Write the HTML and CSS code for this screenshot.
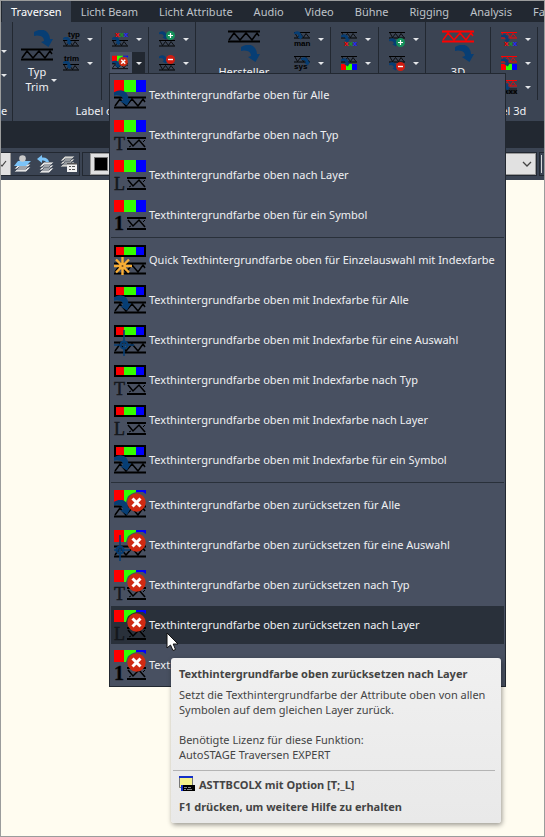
FILE: index.html
```html
<!DOCTYPE html>
<html lang="de">
<head>
<meta charset="utf-8">
<title>Traversen</title>
<link rel="stylesheet" href="styles.css">
</head>
<body>
<svg class="defs" aria-hidden="true">
  <symbol id="truss" viewBox="0 0 32 13" preserveAspectRatio="none"><path d="M0 1.500H32M0 11.500H32" stroke="currentColor" stroke-width="2"/><path d="M1 10L6 3L12 10L18 3L24 10L29 3L31 6" fill="none" stroke="currentColor" stroke-width="1.500"/></symbol>
  <symbol id="truss-s" viewBox="0 0 16 7"><path d="M0 .5H16M0 6H16" fill="none" stroke="currentColor"/><path d="M1 1L3.500 5.500L6.500 1.500L9.500 5.500L12 1.500L15 5.500" fill="none" stroke="currentColor" stroke-width=".8"/></symbol>
  <symbol id="truss-x" viewBox="0 0 19 13"><path d="M0 1H19M0 12H19" stroke="currentColor" stroke-width="2"/><path d="M1 3L6 9L12 3L18 10" fill="none" stroke="currentColor" stroke-width="1.500"/><path d="M2 10L4 9M16 5L18 3" stroke="currentColor"/></symbol>
  <symbol id="arrow" viewBox="0 0 19 17"><path d="M0 2Q9-3 14 3Q16 6 16 9L19 9L14.500 17L7 12L10 11Q10 7 6.500 6Q3 5 0 6Z" fill="#073e74"/></symbol>
  <symbol id="rgb" viewBox="0 0 32 12"><path d="M0 0H10V12H0Z" fill="red"/><path d="M10 0H22V12H10Z" fill="#3f0"/><path d="M22 0H32V12H22Z" fill="#00f"/></symbol>
  <symbol id="rgb-frame" viewBox="0 0 32 12"><path d="M0 0H32V12H0Z"/><path d="M2 2H10V10H2Z" fill="red"/><path d="M10 2H22V10H10Z" fill="#3f0"/><path d="M22 2H30V10H22Z" fill="#00f"/></symbol>
  <symbol id="rgb-cut" viewBox="0 0 32 12"><path d="M0 0H10V12H0Z" fill="red"/><path d="M10 0H22V2Q13 4 12 12H10Z" fill="#3f0"/><path d="M22 0H32V4L29 2H22Z" fill="#00f"/></symbol>
  <symbol id="cross" viewBox="0 0 19 19"><circle cx="9.500" cy="9.500" r="9.200" fill="#cf2a12"/><path d="M5.500 5.500L13.500 13.500M13.500 5.500L5.500 13.500" stroke="#fff" stroke-width="3"/></symbol>
  <symbol id="plus" viewBox="0 0 9 9"><circle cx="4.500" cy="4.500" r="4.500" fill="#14905a"/><path d="M2 4.500H7M4.500 2V7" stroke="#fff" stroke-width="1.200"/></symbol>
  <symbol id="minus" viewBox="0 0 9 9"><circle cx="4.500" cy="4.500" r="4.500" fill="#cf1c10"/><path d="M2 4.500H7" stroke="#fff" stroke-width="1.400"/></symbol>
  <symbol id="target" viewBox="0 0 20 26"><path d="M10 0V26M0 15H20" stroke="#073e74" stroke-width="1.600"/><circle cx="10" cy="15" r="3.500" fill="none" stroke="#073e74" stroke-width="2"/></symbol>
  <symbol id="i-all" viewBox="0 0 32 32"><use href="#rgb" y="1" width="32" height="12"/><use href="#truss" y="17" width="32" height="13"/><use href="#arrow" y="11" width="17" height="16"/></symbol>
  <symbol id="i-sel" viewBox="0 0 32 32"><use href="#rgb" y="1" width="32" height="12"/><use href="#truss-x" x="13" y="18" width="19" height="13"/></symbol>
  <symbol id="f-quick" viewBox="0 0 32 32"><use href="#rgb-frame" y="1" width="32" height="12"/><use href="#truss" y="18" width="32" height="13"/><path d="M8.500 13V31M0 22H18M2 15.500L15 28.500M15 15.500L2 28.500" stroke="#f9ad35" stroke-width="2.400"/><circle cx="8.500" cy="22" r="3.500" fill="#f9ad35"/><circle cx="8.500" cy="22" r="1" fill="#7a5220"/></symbol>
  <symbol id="f-all" viewBox="0 0 32 32"><use href="#rgb-frame" y="1" width="32" height="12"/><use href="#truss" y="17" width="32" height="13"/><use href="#arrow" y="11" width="17" height="16"/></symbol>
  <symbol id="f-pick" viewBox="0 0 32 32"><use href="#rgb-frame" y="1" width="32" height="12"/><use href="#truss" y="17" width="32" height="13"/><use href="#target" y="6" width="20" height="26"/></symbol>
  <symbol id="f-sel" viewBox="0 0 32 32"><use href="#rgb-frame" y="1" width="32" height="12"/><use href="#truss-x" x="13" y="18" width="19" height="13"/></symbol>
  <symbol id="r-all" viewBox="0 0 32 32"><use href="#rgb-cut" y="1" width="32" height="12"/><use href="#truss" y="16" width="32" height="13"/><use href="#arrow" y="11" width="17" height="15"/><use href="#cross" x="13" y="4" width="19" height="19"/></symbol>
  <symbol id="r-pick" viewBox="0 0 32 32"><use href="#rgb-cut" y="1" width="32" height="12"/><use href="#truss" y="16" width="32" height="13"/><use href="#target" x="-4" y="6" width="20" height="26"/><use href="#cross" x="13" y="4" width="19" height="19"/></symbol>
  <symbol id="r-sel" viewBox="0 0 32 32"><use href="#rgb-cut" y="1" width="32" height="12"/><use href="#truss-x" x="13" y="18" width="19" height="13"/><use href="#cross" x="13" y="4" width="19" height="19"/></symbol>
</svg>

<div class="app">
  <nav class="tabs">
    <a href="#" class="tab active">Traversen</a><a href="#" class="tab">Licht Beam</a><a href="#" class="tab">Licht Attribute</a><a href="#" class="tab">Audio</a><a href="#" class="tab">Video</a><a href="#" class="tab">Bühne</a><a href="#" class="tab">Rigging</a><a href="#" class="tab">Analysis</a><a href="#" class="tab">Fa</a>
  </nav>

  <div class="ribbon">
    <section class="panel stub">
      <div class="tools"><div class="col">
        <button class="split" aria-label="Mehr"><i class="caret"></i></button>
        <button class="split" aria-label="Mehr"><i class="caret"></i></button>
      </div></div>
      <h2>e</h2>
    </section>

    <section class="panel">
      <div class="tools">
        <button class="big">
          <svg width="32" height="32" viewBox="0 0 32 32"><use href="#arrow" x="13" y="0" width="19" height="17"/><use href="#truss" y="18" width="32" height="13"/></svg>
          <span class="two">Typ<br>Trim<i class="caret"></i></span>
        </button>
        <div class="col plain">
          <button class="split" aria-label="Typ"><svg width="16" height="16" viewBox="0 0 16 16"><text x="5" y="6" class="tiny">typ</text><use href="#truss-s" y="9" width="16" height="7"/><use href="#arrow" y="6" width="9" height="8"/></svg><i class="caret"></i></button>
          <button class="split" aria-label="Trim"><svg width="16" height="16" viewBox="0 0 16 16"><text x="1" y="6" class="tiny">trim</text><use href="#truss-s" y="9" width="16" height="7"/><use href="#arrow" y="6" width="9" height="8"/></svg><i class="caret"></i></button>
        </div>
        <div class="col">
          <button class="split" aria-label="Textfarbe oben"><svg width="16" height="16" viewBox="0 0 16 16"><text x="3" y="6" class="tiny"><tspan class="red">x</tspan><tspan class="green">x</tspan><tspan class="blue">x</tspan></text><use href="#truss-s" y="9" width="16" height="7"/><use href="#arrow" y="6" width="9" height="8"/></svg><i class="caret"></i></button>
          <button class="split open" aria-label="Texthintergrundfarbe oben"><svg width="16" height="16" viewBox="0 0 32 32"><use href="#r-all" width="32" height="32"/></svg><i class="caret"></i></button>
        </div>
        <div class="col">
          <button class="split" aria-label="Oben ein"><svg width="16" height="16" viewBox="0 0 16 16"><use href="#truss-s" y="9" width="16" height="7"/><use href="#arrow" width="9" height="9"/><use href="#plus" x="7" width="9" height="9"/></svg><i class="caret"></i></button>
          <button class="split" aria-label="Oben aus"><svg width="16" height="16" viewBox="0 0 16 16"><use href="#truss-s" y="9" width="16" height="7"/><use href="#arrow" width="9" height="9"/><use href="#minus" x="7" width="9" height="9"/></svg><i class="caret"></i></button>
        </div>
      </div>
      <h2>Label oben</h2>
    </section>

    <section class="panel">
      <div class="tools">
        <button class="big wide">
          <svg width="32" height="32" viewBox="0 0 32 32"><use href="#truss" y="0" width="32" height="13"/><use href="#arrow" x="13" y="15" width="19" height="17"/></svg>
          <span>Hersteller</span>
        </button>
        <div class="col plain">
          <button class="split" aria-label="Manuell"><svg width="16" height="16" viewBox="0 0 16 16"><use href="#truss-s" y="1" width="16" height="7"/><use href="#arrow" y="0" width="9" height="9"/><text x="0" y="15" class="tiny">man</text></svg><i class="caret"></i></button>
          <button class="split" aria-label="System"><svg width="16" height="16" viewBox="0 0 16 16"><use href="#truss-s" y="1" width="16" height="7"/><use href="#arrow" x="7" y="2" width="9" height="9"/><text x="0" y="14" class="tiny">sys</text></svg><i class="caret"></i></button>
        </div>
        <div class="col">
          <button class="split" aria-label="Textfarbe unten"><svg width="16" height="16" viewBox="0 0 16 16"><use href="#truss-s" y="1" width="16" height="7"/><text x="3" y="15" class="tiny"><tspan class="red">x</tspan><tspan class="green">x</tspan><tspan class="blue">x</tspan></text><use href="#arrow" y="3" width="9" height="9"/></svg><i class="caret"></i></button>
          <button class="split" aria-label="Texthintergrundfarbe unten"><svg width="16" height="16" viewBox="0 0 16 16"><use href="#truss-s" y="1" width="16" height="7"/><use href="#rgb" y="9" width="16" height="6"/><use href="#arrow" y="3" width="9" height="9"/></svg><i class="caret"></i></button>
        </div>
        <div class="col">
          <button class="split" aria-label="Unten ein"><svg width="16" height="16" viewBox="0 0 16 16"><use href="#truss-s" y="1" width="16" height="7"/><use href="#arrow" y="7" width="9" height="9"/><use href="#plus" x="7" y="7" width="9" height="9"/></svg><i class="caret"></i></button>
          <button class="split" aria-label="Unten aus"><svg width="16" height="16" viewBox="0 0 16 16"><use href="#truss-s" y="1" width="16" height="7"/><use href="#arrow" y="7" width="9" height="9"/><use href="#minus" x="7" y="7" width="9" height="9"/></svg><i class="caret"></i></button>
        </div>
      </div>
    </section>

    <section class="panel">
      <div class="tools">
        <button class="big mid">
          <svg width="32" height="32" viewBox="0 0 32 32"><use href="#truss" class="redline" y="0" width="32" height="13"/><use href="#arrow" x="13" y="15" width="19" height="17"/></svg>
          <span>3D</span>
        </button>
        <div class="col">
          <button class="split" aria-label="Textfarbe 3d"><svg width="16" height="16" viewBox="0 0 16 16"><use href="#truss-s" class="redline" y="1" width="16" height="7"/><text x="3" y="15" class="tiny"><tspan class="red">x</tspan><tspan class="green">x</tspan><tspan class="blue">x</tspan></text><use href="#arrow" y="3" width="9" height="9"/></svg><i class="caret"></i></button>
          <button class="split" aria-label="Texthintergrundfarbe 3d"><svg width="16" height="16" viewBox="0 0 16 16"><use href="#truss-s" class="redline" y="1" width="16" height="7"/><use href="#rgb" y="9" width="16" height="6"/><use href="#arrow" y="3" width="9" height="9"/></svg><i class="caret"></i></button>
          <button class="split" aria-label="Textmaske 3d"><svg width="16" height="16" viewBox="0 0 16 16"><use href="#truss-s" class="redline" y="1" width="16" height="7"/><path d="M0 9H16V15H0Z" fill="#252b33"/><text x="3" y="15" class="tiny">xxx</text><use href="#arrow" y="3" width="9" height="9"/></svg><i class="caret"></i></button>
        </div>
        <div class="col"></div>
      </div>
      <h2>Label 3d</h2>
    </section>
  </div>

  <div class="gap"></div>

  <div class="bars">
    <div class="bar layers">
      <button class="drop" aria-label="Layer"><svg width="6" height="8" viewBox="0 0 6 8"><path d="M0 5L1 6L5 1" fill="none" stroke="#444" stroke-width="1.200"/></svg></button>
      <button class="tool" aria-label="Layer aktuell"><svg width="18" height="18" viewBox="0 0 18 18"><path d="M5 12L17 12L12 17H0ZM5 9L17 9L12 14H0Z" fill="#e4e4e4" stroke="#3b4453" stroke-width=".8"/><path d="M4 6H17L12 11H0Z" fill="#7cc4f8"/><circle cx="8.500" cy="3.500" r="3.300" fill="#c9c9c9"/></svg></button>
      <button class="tool" aria-label="Layer zurück"><svg width="18" height="18" viewBox="0 0 18 18"><path d="M7 13H17L12 18H2ZM7 10H17L12 15H2ZM7 7H17L12 12H2Z" fill="#e4e4e4" stroke="#3b4453" stroke-width=".8"/><path d="M0 4L5 0V2.500Q11 2 12 7H9Q8 5 5 5.500V8Z" fill="#7cc4f8"/></svg></button>
      <button class="tool" aria-label="Layerstatus"><svg width="18" height="18" viewBox="0 0 18 18"><path d="M5 7H15L10 12H0ZM5 4H15L10 9H0ZM5 1H15L10 6H0Z" fill="#d4d4d0" stroke="#3b4453" stroke-width=".8"/><path d="M7 8H17V17H7Z" fill="#f2f2f2"/><path d="M7 8H17V9.500H7ZM9 11H11V12H9ZM12 11H15V12H12ZM9 14H11V15H9ZM12 14H15V15H12Z" fill="#555"/></svg></button>
    </div>
    <div class="bar color">
      <i class="grip"></i>
      <button class="combo" aria-label="Farbe"><i class="swatch"></i><svg width="10" height="6" viewBox="0 0 10 6"><path d="M1 1L5 5L9 1" fill="none" stroke="#444" stroke-width="1.300"/></svg></button>
    </div>
    <div class="bar tail"><i class="edge"></i></div>
  </div>

  <main class="canvas"></main>

  <div class="menu" role="menu">
    <button class="item"><svg><use href="#i-all"/></svg>Texthintergrundfarbe oben für Alle</button>
    <button class="item"><svg><use href="#i-sel"/><text x="0" y="31" class="letter">T</text></svg>Texthintergrundfarbe oben nach Typ</button>
    <button class="item"><svg><use href="#i-sel"/><text x="0" y="31" class="letter">L</text></svg>Texthintergrundfarbe oben nach Layer</button>
    <button class="item"><svg><use href="#i-sel"/><text x="0" y="31" class="letter strong">1</text></svg>Texthintergrundfarbe oben für ein Symbol</button>
    <hr>
    <button class="item"><svg><use href="#f-quick"/></svg>Quick Texthintergrundfarbe oben für Einzelauswahl mit Indexfarbe</button>
    <button class="item"><svg><use href="#f-all"/></svg>Texthintergrundfarbe oben mit Indexfarbe für Alle</button>
    <button class="item"><svg><use href="#f-pick"/></svg>Texthintergrundfarbe oben mit Indexfarbe für eine Auswahl</button>
    <button class="item"><svg><use href="#f-sel"/><text x="0" y="31" class="letter">T</text></svg>Texthintergrundfarbe oben mit Indexfarbe nach Typ</button>
    <button class="item"><svg><use href="#f-sel"/><text x="0" y="31" class="letter">L</text></svg>Texthintergrundfarbe oben mit Indexfarbe nach Layer</button>
    <button class="item"><svg><use href="#f-all"/></svg>Texthintergrundfarbe oben mit Indexfarbe für ein Symbol</button>
    <hr>
    <button class="item"><svg><use href="#r-all"/></svg>Texthintergrundfarbe oben zurücksetzen für Alle</button>
    <button class="item"><svg><use href="#r-pick"/></svg>Texthintergrundfarbe oben zurücksetzen für eine Auswahl</button>
    <button class="item"><svg><use href="#r-sel"/><text x="0" y="31" class="letter">T</text></svg>Texthintergrundfarbe oben zurücksetzen nach Typ</button>
    <button class="item hover"><svg><use href="#r-sel"/><text x="0" y="31" class="letter">L</text></svg>Texthintergrundfarbe oben zurücksetzen nach Layer</button>
    <button class="item"><svg><use href="#r-sel"/><text x="0" y="31" class="letter strong">1</text></svg>Text</button>
  </div>

  <div class="tip" role="tooltip">
    <h3>Texthintergrundfarbe oben zurücksetzen nach Layer</h3>
    <p>Setzt die Texthintergrundfarbe der Attribute oben von allen<br>Symbolen auf dem gleichen Layer zurück.</p>
    <p>Benötigte Lizenz für diese Funktion:<br>AutoSTAGE Traversen EXPERT</p>
    <div class="rule"></div>
    <strong class="cmd"><svg width="16" height="16" viewBox="0 0 16 16"><path d="M0 0H14V12H0Z" fill="#f5f28a"/><path d="M0 0H14V2H0Z" fill="#1430c8"/><path d="M.5 2V11.500H4M13.500 2V9" fill="none" stroke="#777"/><path d="M2 9H16V15H2Z"/><path d="M2 9H4V15H2Z" fill="#1430c8"/><path d="M5 11.500H8M9 11.500H12M5 13.500H7M8 13.500H13" stroke="#aaa" stroke-width=".8"/></svg>ASTTBCOLX mit Option [T;_L]</strong>
    <strong class="help">F1 drücken, um weitere Hilfe zu erhalten</strong>
  </div>

  <svg class="pointer" width="13" height="20" viewBox="0 0 13 20" aria-hidden="true"><path d="M1 1V16L4.500 13L7 18.500L9.500 17.500L7.200 12H12Z" fill="#fff" stroke="#111"/></svg>
</div>
</body>
</html>
```
FILE: styles.css
```css
* { box-sizing: border-box; }

body {
  margin: 0;
  font: 11px/16px "Noto Sans", "Open Sans", sans-serif;
  color: #f0f1f3;
}

button {
  margin: 0;
  padding: 0;
  border: 0;
  background: none;
  color: inherit;
  font: inherit;
}

svg { display: block; flex: none; color: #000; overflow: visible; }
.defs { position: absolute; width: 0; height: 0; overflow: hidden; }

.app {
  position: relative;
  display: flex;
  flex-direction: column;
  min-height: 100vh;
  overflow: hidden;
  border: 1px solid #9b9c9c;
  background: #222831;
}

/* tabs */
.tabs { display: flex; height: 21px; padding-left: 1px; white-space: nowrap; overflow: hidden; }
.tab {
  flex: none;
  padding: 3px 11px 0 10px;
  color: #bfc3c9;
  text-decoration: none;
  line-height: 16px;
}
.tab.active { padding: 3px 9px 0; background: #3b4453; color: #fff; }

/* ribbon */
.ribbon {
  display: grid;
  grid-template-columns: 12px 183px 230px 158px;
  height: 99px;
  overflow: hidden;
  background: #3b4453;
}
.panel {
  display: flex;
  flex-direction: column;
  min-width: 0;
  border-right: 1px solid #222831;
  overflow: hidden;
}
.panel h2 {
  margin: 0;
  font-size: 11px;
  line-height: 16px;
  font-weight: 400;
  text-align: center;
  white-space: nowrap;
}
.stub h2 { text-align: left; }
.tools { display: flex; height: 81px; padding-top: 5px; }
.big {
  display: flex;
  flex-direction: column;
  align-items: center;
  width: 49px;
  padding: 3px 0 0;
  line-height: 15px;
}
.big.wide { width: 97px; }
.big.mid { width: 67px; }
.big span { margin-top: 2px; }
.two { position: relative; }
.two .caret { position: absolute; right: -8px; top: 15px; }
.col {
  width: 48px;
  height: 73px;
  padding-left: 1px;
  border-left: 1px solid #222831;
}
.col.plain { width: 40px; padding-left: 0; border-left: 0; }
.wide + .plain { width: 39px; }
.stub .col { border: 0; padding: 12px 0 0; width: 11px; }
.split { display: flex; align-items: center; width: 36px; height: 24px; }
.col:not(.plain) .split { padding-left: 9px; width: 45px; }
.col.plain .split { padding-left: 2px; }
.split svg + .caret { margin-left: 8px; }
.stub .col:not(.plain) .split { width: 11px; padding: 0; }
.caret {
  flex: none;
  border: 3px solid transparent;
  border-top-color: #e4e6e9;
  border-bottom-width: 0;
}
.col:not(.plain) .split.open {
  width: 35px;
  height: 22px;
  margin: 1px 0 0 7px;
  padding-left: 2px;
  background: linear-gradient(90deg, #4b5467 22px, #222831 22px);
}

.gap { height: 27px; }

/* toolbars */
.bars {
  display: flex;
  gap: 2px;
  height: 32px;
  padding: 4px 0;
  background: #3b4453;
}
.bar { display: flex; align-items: center; border: 1px solid #222831; }
.layers { width: 79px; border-left: 0; gap: 6px; }
.drop { display: flex; align-items: center; width: 10px; height: 22px; margin-right: -3px; background: #e1e1e1; border-right: 1px solid #999; }
.tool { width: 17px; }
.color { flex: 1; gap: 2px; padding-left: 1px; }
.grip { width: 4px; height: 14px; background: radial-gradient(circle, #d6d8db 25%, transparent 30%) 0 0 / 2px 2px; }
.combo {
  display: flex;
  flex: 1;
  align-items: center;
  justify-content: space-between;
  height: 22px;
  padding: 0 3px;
  border: 1px solid #999;
  background: #e1e1e1;
}
.swatch { width: 14px; height: 14px; border: 1px solid #777; background: #000; }
.tail { width: 5px; border-right: 0; padding-left: 1px; }
.edge { width: 1px; height: 18px; background: #d6d8db; }

.canvas { flex: 1; background: #fffcf0; }

/* drop-down menu */
.menu {
  position: absolute;
  left: 108px;
  top: 72px;
  width: 397px;
  padding: 1px;
  border: 1px solid #222831;
  background: #485061;
}
.item {
  display: flex;
  align-items: center;
  gap: 3px;
  width: 100%;
  height: 40px;
  padding-left: 3px;
  text-align: left;
  white-space: nowrap;
  border: solid #485061;
  border-width: 1px 0;
}
.item svg { width: 32px; height: 32px; }
.item.hover { background: #29303a; }
.menu hr { height: 1px; margin: 2px 0; border: 0; background: #29303a; }

/* tooltip */
.tip {
  position: absolute;
  left: 170px;
  top: 657px;
  width: 330px;
  padding: 8px 6px 8px 8px;
  border-radius: 3px;
  background: linear-gradient(#f0f0f0, #e9e9e9);
  box-shadow: 1px 2px 5px rgba(0, 0, 0, .4);
  color: #444;
  line-height: 15px;
  white-space: nowrap;
}
.tip h3 { margin: 0 0 5px; font-size: 11px; line-height: 16px; }
.tip p { margin: 0 0 15px; }
.tip p + p { margin-bottom: 8px; }
.rule { height: 1px; margin: 0 0 5px -6px; background: #b4b4b4; }
.cmd { display: flex; align-items: center; gap: 4px; height: 16px; }
.help { display: block; margin-top: 7px; line-height: 16px; }

.pointer { position: absolute; left: 165px; top: 631px; }

/* icon lettering */
.letter { font: 18px "Liberation Serif", serif; fill: #14171c; stroke: #14171c; stroke-width: .5; }
.letter.strong { font-weight: 700; font-size: 20px; fill: #000; }
.tiny { font: bold 8px "Liberation Sans", sans-serif; fill: #000; }
.tiny .red { fill: #f00; }
.tiny .green { fill: #1a9a20; }
.tiny .blue { fill: #22f; }
.redline { color: #f00; }
```
